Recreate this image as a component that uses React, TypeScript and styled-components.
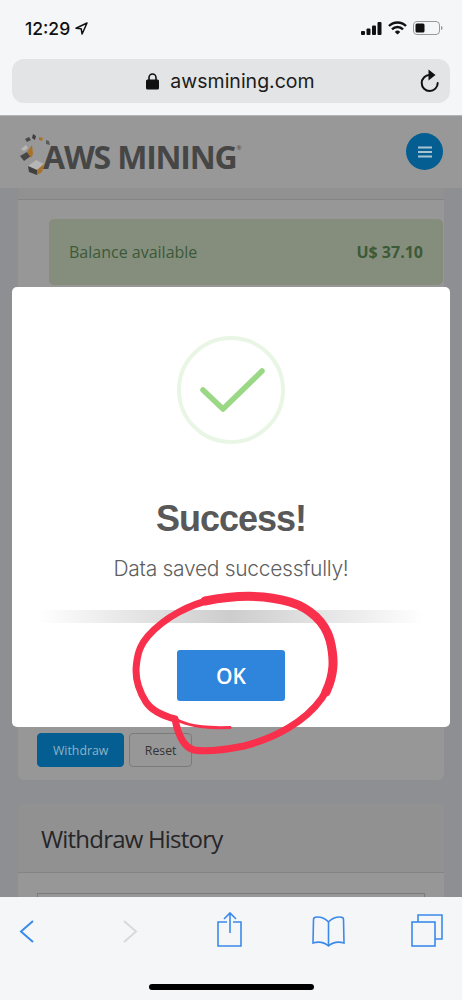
import React from "react";
import styled, { createGlobalStyle } from "styled-components";

const GlobalStyle = createGlobalStyle`
	html, body {
		margin: 0;
		padding: 0;
		background: #f5f6f8;
	}
`;

const Phone = styled.div`
	position: relative;
	width: 462px;
	height: 1000px;
	display: flex;
	flex-direction: column;
	overflow: hidden;
	font-family: "Open Sans", sans-serif;
`;

/* browser chrome */
const TopChrome = styled.div`
	height: 115px;
	flex: none;
	box-sizing: border-box;
	background: #f5f6f8;
	padding: 0 12px;
	display: flex;
	flex-direction: column;
`;

const StatusBar = styled.div`
	height: 59px;
	padding: 0 7px 3px 13px;
	box-sizing: border-box;
	display: flex;
	align-items: center;
	justify-content: space-between;
`;

const Clock = styled.div`
	display: flex;
	align-items: center;
	gap: 5px;
	font-family: Inter, sans-serif;
	font-size: 17.5px;
	font-weight: 500;
	color: #111;
`;

const StatusIcons = styled.div`
	display: flex;
	align-items: center;
	gap: 6px;
`;

const AddressBar = styled.div`
	position: relative;
	height: 44px;
	border-radius: 12px;
	background: #e2e4e6;
	display: flex;
	align-items: center;
	justify-content: center;
	gap: 11px;
	padding-right: 1px;
	font-family: Inter, sans-serif;
	font-size: 19.5px;
	color: #1b1b1b;
`;

const ReloadIcon = styled.svg`
	position: absolute;
	right: 9px;
	top: 10px;
`;

/* dimmed page */
const Page = styled.div`
	position: relative;
	flex: 1;
	min-height: 0;
	background: #8e8f92;
	border-top: 1px solid #b5b5b5;
	overflow: hidden;
	display: flex;
	flex-direction: column;
`;

const SiteHeader = styled.div`
	height: 72px;
	flex: none;
	box-sizing: border-box;
	background: #989898;
	padding: 0 19px;
	display: flex;
	align-items: center;
	justify-content: space-between;
`;

const Logo = styled.div`
	display: flex;
	align-items: flex-start;
	height: 44px;
	margin-top: 1px;
`;

const LogoText = styled.span`
	margin-left: -8px;
	margin-top: 6px;
	font-family: "Open Sans", sans-serif;
	font-size: 32px;
	line-height: 40px;
	font-weight: 700;
	letter-spacing: -1.2px;
	color: #464646;
	white-space: nowrap;
`;

const Registered = styled.sup`
	font-size: 6px;
	line-height: 0;
	vertical-align: 19px;
	font-weight: 400;
	letter-spacing: 0;
`;

const MenuButton = styled.div`
	width: 37px;
	height: 37px;
	margin-top: -1px;
	border-radius: 50%;
	background: #045e91;
	display: flex;
	align-items: center;
	justify-content: center;
`;

const Content = styled.div`
	padding: 0 18px;
	display: flex;
	flex-direction: column;
	gap: 24px;
`;

const WithdrawCard = styled.div`
	height: 592px;
	box-sizing: border-box;
	background: #979797;
	border-radius: 0 0 6px 6px;
	display: flex;
	flex-direction: column;
	justify-content: space-between;
`;

const CardStrip = styled.div`
	height: 11px;
	border-bottom: 1px solid #848484;
	background: #919191;
`;

const BalanceBox = styled.div`
	height: 66px;
	margin: 19px 1px 0 31px;
	padding: 0 20px;
	border-radius: 5px;
	background: #858d7d;
	display: flex;
	align-items: center;
	justify-content: space-between;
	font-size: 16px;
	color: #3b5a38;
`;

const BalanceAmount = styled.strong`
	font-weight: 700;
`;

const CardTop = styled.div``;

const CardActions = styled.div`
	display: flex;
	gap: 5px;
	padding: 0 19px 13px;
`;

const ActionButton = styled.div<{ $primary?: boolean }>`
	height: 34px;
	box-sizing: border-box;
	padding: 0 ${(props) => (props.$primary ? "15px" : "14.5px")};
	border-radius: 4px;
	display: flex;
	align-items: center;
	font-size: 12.3px;
	background: ${(props) => (props.$primary ? "#045e91" : "transparent")};
	border: 1px solid ${(props) => (props.$primary ? "#045e91" : "#7b7b7b")};
	color: ${(props) => (props.$primary ? "#8fb3c7" : "#333")};
`;

const HistoryCard = styled.div`
	background: #979797;
	border-radius: 6px 6px 0 0;
	height: 94px;
`;

const HistoryHeader = styled.div`
	height: 69px;
	box-sizing: border-box;
	padding: 18px 23px 0;
	border-bottom: 1px solid #848484;
	font-size: 24px;
	line-height: 34px;
	letter-spacing: -0.8px;
	color: #262628;
	background: #919192;
	border-radius: 6px 6px 0 0;
`;

const HistoryTable = styled.div`
	height: 20px;
	margin: 20px 19px 0;
	border: 1px solid #7b7b7b;
	border-bottom: none;
`;

/* sweet-alert style dialog, lies over the page */
const Modal = styled.div`
	position: absolute;
	left: 12px;
	top: 171px;
	width: 438px;
	height: 440px;
	box-sizing: border-box;
	padding-top: 49px;
	background: #fff;
	border-radius: 5px;
	display: flex;
	flex-direction: column;
	align-items: center;
`;

const SuccessCircle = styled.div`
	width: 108px;
	height: 108px;
	box-sizing: border-box;
	border: 4px solid #eaf6e5;
	border-radius: 50%;
	display: flex;
	align-items: center;
	justify-content: center;
`;

const ModalTitle = styled.h2`
	margin: 53px 0 0;
	font-family: "Liberation Sans", sans-serif;
	font-size: 36px;
	line-height: 44px;
	font-weight: 700;
	letter-spacing: -1px;
	color: #585858;
`;

const ModalText = styled.p`
	margin: 14px 0 0;
	font-family: Inter, sans-serif;
	font-size: 21px;
	line-height: 28px;
	font-weight: 300;
	letter-spacing: -0.3px;
	color: #5f5f5f;
`;

const Divider = styled.div`
	width: 386px;
	height: 13px;
	margin-top: 27px;
	background: linear-gradient(90deg, #ffffff 0%, #ececec 18%, #cdcdcd 50%, #ececec 82%, #ffffff 100%);
`;

const OkButton = styled.div`
	width: 108px;
	height: 51px;
	margin-top: 27px;
	border-radius: 3px;
	background: #2f85dc;
	display: flex;
	align-items: center;
	justify-content: center;
	font-size: 21px;
	font-weight: 600;
	color: #fff;
`;

const Scribble = styled.svg`
	position: absolute;
	left: 0;
	top: 0;
	pointer-events: none;
`;

/* bottom safari toolbar */
const BottomBar = styled.div`
	height: 103px;
	flex: none;
	box-sizing: border-box;
	background: #f5f6f8;
	padding-top: 12px;
	display: flex;
	flex-direction: column;
	align-items: center;
`;

const ToolRow = styled.div`
	width: 100%;
	box-sizing: border-box;
	padding: 0 7px;
	display: flex;
	gap: 60px;
`;

const ToolIcon = styled.svg`
	width: 40px;
	height: 40px;
	fill: none;
	stroke: ${(props) => props.color || "#3b8aea"};
	stroke-width: 1.6;
`;

const HomeIndicator = styled.div`
	width: 165px;
	height: 6px;
	margin-top: 35px;
	border-radius: 3px;
	background: #000;
`;

const LogoMark = () => (
	<svg width="32" height="44" viewBox="0 0 32 44">
		<path d="M6 8l4-2 2 3-4 2z" fill="#4a4a4a" />
		<path d="M14 3l3 2-1 4-3-2z" fill="#3e3e3e" />
		<path d="M20 6l4 1-1 3-3-1z" fill="#a8722a" />
		<path d="M27 9l3 1 1 4-4-1z" fill="#5a5a5a" />
		<path d="M2 18l5-4 2 3-4 3z" fill="#b8b8b8" />
		<path d="M1 25l7-4 4 4-7 5z" fill="#464646" />
		<path d="M8 21l5-7 1 9-2 4z" fill="#a8722a" />
		<path d="M9 35l8-6 8 4-7 6z" fill="#b5b5b5" />
		<path d="M9 35l9 4v5l-8-3z" fill="#404040" />
		<path d="M18 39l7-6-2 8-5 3z" fill="#a8722a" />
	</svg>
);

export default function App() {
	return (
		<Phone>
			<GlobalStyle />
			<TopChrome>
				<StatusBar>
					<Clock>
						12:29
						<svg width="13" height="13" viewBox="0 0 13 13" fill="none" stroke="#111" strokeWidth="1.5">
							<path d="M12 1L1 6.2l5.2.6.9 5.2z" strokeLinejoin="round" />
						</svg>
					</Clock>
					<StatusIcons>
						<svg width="21" height="13" viewBox="0 0 21 13" fill="#111">
							<rect x="0" y="9" width="4" height="4" rx="1" />
							<rect x="5.5" y="6.5" width="4" height="6.5" rx="1" />
							<rect x="11" y="3.5" width="4" height="9.5" rx="1" />
							<rect x="16.5" y="0" width="4" height="13" rx="1" />
						</svg>
						<svg width="19" height="14" viewBox="0 0 19 14" fill="none" stroke="#111" strokeWidth="2.4">
							<path d="M1 5a12 12 0 0 1 17 0" />
							<path d="M4 8.4a7.6 7.6 0 0 1 11 0" />
							<path d="M9.5 13.6L6.8 10.9a3.8 3.8 0 0 1 5.4 0z" fill="#111" stroke="none" />
						</svg>
						<svg width="30" height="14" viewBox="0 0 30 14" fill="none">
							<rect x="0.5" y="0.5" width="26" height="13" rx="3.5" stroke="#999" />
							<rect x="2.5" y="2.5" width="9" height="9" rx="1.5" fill="#111" />
							<path d="M28 5v4c1-.3 1.5-1 1.5-2s-.5-1.7-1.5-2z" fill="#999" />
						</svg>
					</StatusIcons>
				</StatusBar>
				<AddressBar>
					<svg width="13" height="17" viewBox="0 0 13 17" fill="#111">
						<rect x="0" y="6.5" width="13" height="10" rx="1.5" />
						<path d="M3 7V4.5a3.5 3.5 0 0 1 7 0V7" fill="none" stroke="#111" strokeWidth="1.6" />
					</svg>
					awsmining.com
					<ReloadIcon width="24" height="24" viewBox="0 0 24 24" fill="none" stroke="#111" strokeWidth="2">
						<path d="M12.5 6a8 8 0 1 0 8.2 8" strokeLinecap="round" />
						<path d="M11.5 0.5l7 5.5-7 5.5z" fill="#111" stroke="none" />
					</ReloadIcon>
				</AddressBar>
			</TopChrome>

			<Page>
				<SiteHeader>
					<Logo>
						<LogoMark />
						<LogoText>
							AWS MINING<Registered>®</Registered>
						</LogoText>
					</Logo>
					<MenuButton>
						<svg width="14" height="12" viewBox="0 0 14 12" stroke="#a9c3d3" strokeWidth="2">
							<path d="M0 1.5h14M0 6h14M0 10.5h14" />
						</svg>
					</MenuButton>
				</SiteHeader>
				<Content>
					<WithdrawCard>
						<CardTop>
							<CardStrip />
							<BalanceBox>
								Balance available
								<BalanceAmount>U$ 37.10</BalanceAmount>
							</BalanceBox>
						</CardTop>
						<CardActions>
							<ActionButton $primary>Withdraw</ActionButton>
							<ActionButton>Reset</ActionButton>
						</CardActions>
					</WithdrawCard>
					<HistoryCard>
						<HistoryHeader>Withdraw History</HistoryHeader>
						<HistoryTable />
					</HistoryCard>
				</Content>

				<Modal>
					<SuccessCircle>
						<svg width="68" height="48" viewBox="0 0 68 48" fill="none" stroke="#9ad886" strokeWidth="5.5" strokeLinecap="round" strokeLinejoin="round">
							<path d="M6 24l20 19L65 5" />
						</svg>
					</SuccessCircle>
					<ModalTitle>Success!</ModalTitle>
					<ModalText>Data saved successfully!</ModalText>
					<Divider />
					<OkButton>OK</OkButton>
				</Modal>
			</Page>

			<BottomBar>
				<ToolRow>
					<ToolIcon viewBox="0 0 40 40">
						<path d="M26 12L14 22.5 26 33" strokeWidth="2" />
					</ToolIcon>
					<ToolIcon viewBox="0 0 40 40" color="#d8d9dc">
						<path d="M17 12l12 10.5L17 33" strokeWidth="2" />
					</ToolIcon>
					<ToolIcon viewBox="0 0 40 40">
						<path d="M20 13h-9v24h23V13h-8" />
						<path d="M23 24V5M17 10l6-6 6 6" />
					</ToolIcon>
					<ToolIcon viewBox="0 0 40 40">
						<path d="M21.5 13c-3-3.5-7-5-11.5-5-2 0-3.5.6-3.500 2.500L6 34c5-1.500 11-1 15.500 3 4.500-4 10.500-4.500 15.500-3l-.5-23.500c0-1.900-1.500-2.500-3.500-2.500-4.500 0-8.500 1.500-11.500 5zM21.500 13v24" />
					</ToolIcon>
					<ToolIcon viewBox="0 0 40 40">
						<rect x="5" y="13" width="23" height="24" />
						<path d="M11 13V6h24v24h-7" />
					</ToolIcon>
				</ToolRow>
				<HomeIndicator />
			</BottomBar>

			<Scribble width="462" height="1000" viewBox="0 0 462 1000" fill="none" stroke="#f9304c" strokeLinecap="round" strokeLinejoin="round">
				<path d="M230 727.5C212 728 192 728 175 719" strokeWidth="3" />
				<path
					d="M175 719C160 715 150 708 146 702C137 688 135 675 136.5 664C138 650 142 643 148 636C165 617 190 604 215 599C240 595 270 596 290 602C310 608 325 622 330 640C335 660 334 680 322 698C305 722 275 738 244 746C224 750 205 752 194 750C183 747 178 735 175 719"
					strokeWidth="7"
				/>
				<path d="M205 601C240 594 270 596 290 602C310 608 325 622 330 640C335 660 334 675 326 692" strokeWidth="9" />
			</Scribble>
		</Phone>
	);
}
